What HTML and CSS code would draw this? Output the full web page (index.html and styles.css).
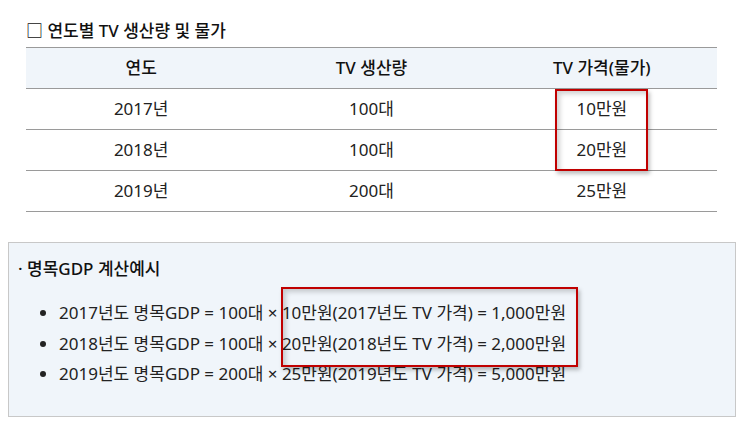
FILE: index.html
```html
<!DOCTYPE html>
<html lang="ko">
<head>
	<meta charset="UTF-8">
	<title>TV 생산량 및 물가</title>
	<link rel="stylesheet" href="styles.css">
</head>
<body>
	<div class="page">
		<div class="tbl-wrap">
			<h3 class="tbl-title">□ 연도별 TV 생산량 및 물가</h3>
			<div class="tbl-box">
				<table class="tv-table">
					<tr>
						<th>연도</th>
						<th>TV 생산량</th>
						<th>TV 가격(물가)</th>
					</tr>
					<tr>
						<td>2017년</td>
						<td>100대</td>
						<td>10만원</td>
					</tr>
					<tr>
						<td>2018년</td>
						<td>100대</td>
						<td>20만원</td>
					</tr>
					<tr>
						<td>2019년</td>
						<td>200대</td>
						<td>25만원</td>
					</tr>
				</table>
				<div class="mark mark-price"></div>
			</div>
		</div>

		<div class="gdp-box">
			<p class="gdp-title">· 명목GDP 계산예시</p>
			<ul class="gdp-list">
				<li>2017년도 명목GDP = 100대 × 10만원(2017년도 TV 가격) = 1,000만원</li>
				<li>2018년도 명목GDP = 100대 × 20만원(2018년도 TV 가격) = 2,000만원</li>
				<li>2019년도 명목GDP = 200대 × 25만원(2019년도 TV 가격) = 5,000만원</li>
			</ul>
			<div class="mark mark-gdp"></div>
		</div>
	</div>
</body>
</html>
```

FILE: styles.css
```css
body{
  margin: 0;
  background: #fff;
  color: #222;
  font-family: "Noto Sans", "Noto Sans CJK KR", sans-serif;
  font-size: 17px;
}
.page{
  padding: 20px 7px 0 8px;
}
/* 표 부분 */
.tbl-wrap{
  margin: 0 18px 0 18px;
}
.tbl-title{
  margin: 0 0 5px 0;
  font-size: 17px;
  font-weight: 500;
  line-height: 22px;
  color: #111;
}
.tbl-box{
  position: relative;
}
.tv-table{
  width: 691px;
  border-collapse: collapse;
  table-layout: fixed;
  border-top: 1px solid #9a9a9a;
}
.tv-table th,
.tv-table td{
  height: 40px;
  padding: 0;
  text-align: center;
  border-bottom: 1px solid #9a9a9a;
  line-height: 20px;
}
.tv-table th{
  background-color: #f0f5fa;
  font-weight: 500;
  color: #111;
}
.tv-table td{
  font-weight: 400;
  color: #222;
}
/* 빨간 표시 */
.mark{
  position: absolute;
  border: 2px solid #c00000;
  box-shadow: 2px 3px 4px rgba(0,0,0,0.25), inset 3px 3px 5px rgba(0,0,0,0.18);
}
.mark-price{
  left: 529px;
  top: 42px;
  width: 89px;
  height: 78px;
}
/* 계산예시 박스 */
.gdp-box{
  position: relative;
  margin-top: 30px;
  width: 726px;
  height: 173px;
  border: 1px solid #c8c8c8;
  background-color: #f0f5fa;
}
.gdp-title{
  margin: 15px 0 0 9px;
  line-height: 22px;
  font-weight: 500;
  color: #111;
}
.gdp-list{
  margin: 18px 0 0 0;
  padding-left: 50px;
}
.gdp-list li{
  line-height: 30.5px;
  color: #222;
}
.mark-gdp{
  left: 272px;
  top: 44px;
  width: 293px;
  height: 76px;
}
```
